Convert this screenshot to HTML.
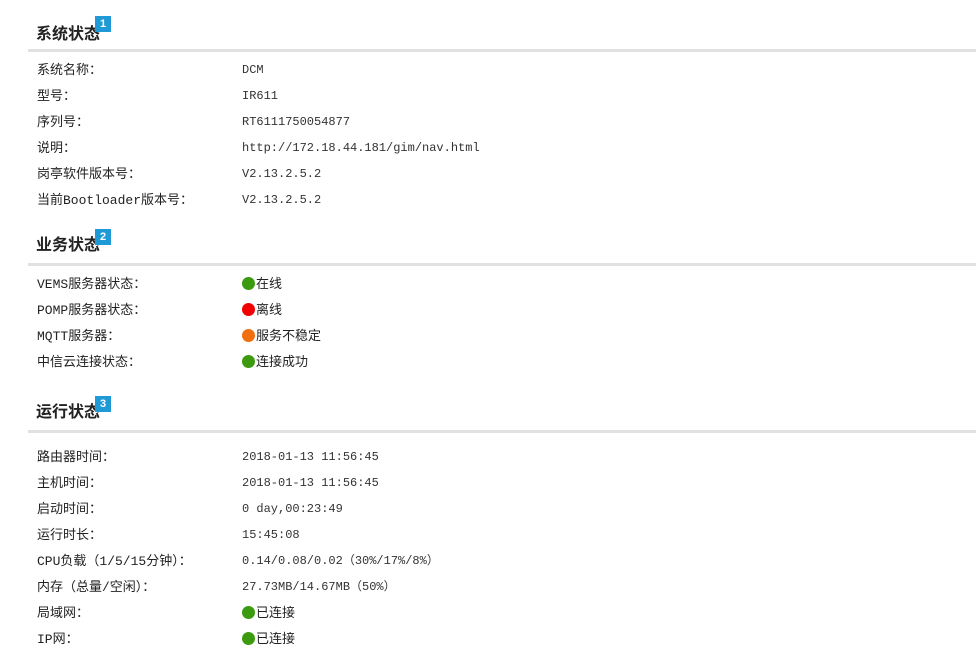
<!DOCTYPE html>
<html><head><meta charset="utf-8"><style>
body{margin:0;width:976px;height:659px;background:#fff;position:relative;overflow:hidden;font-family:"Liberation Mono","Noto Sans CJK SC",monospace;color:#222}
.t{position:absolute;left:36px;font:bold 16px "Liberation Sans","Noto Sans CJK SC",sans-serif;color:#222;line-height:20px}
.b{position:absolute;width:16px;height:16px;background:#1f9ad6;color:#fff;font:bold 11px "Liberation Sans",sans-serif;text-align:center;line-height:16px}
.ln{position:absolute;left:28px;width:948px;height:3px;background:#e1e1e1}
.l{position:absolute;left:37px;font-size:13px;line-height:16px;white-space:nowrap;margin-top:2px}
.v{position:absolute;left:242px;font-size:12px;line-height:16px;white-space:nowrap;margin-top:1px;color:#333}
.d{display:inline-block;width:13px;height:13px;border-radius:50%;vertical-align:-2px;margin-right:1px}
.g{background:#3b9a0e}.r{background:#f00000}.o{background:#f07010}
.c{font-family:"Liberation Sans","Noto Sans CJK SC",sans-serif;font-size:13px;color:#222}
</style></head><body>
<div class="t" style="top:25px">系统状态</div><div class="b" style="left:95px;top:16px">1</div><div class="ln" style="top:49px"></div>
<div class="l" style="top:61px">系统名称：</div><div class="v" style="top:61px">DCM</div>
<div class="l" style="top:87px">型号：</div><div class="v" style="top:87px">IR611</div>
<div class="l" style="top:113px">序列号：</div><div class="v" style="top:113px">RT6111750054877</div>
<div class="l" style="top:139px">说明：</div><div class="v" style="top:139px">http://172.18.44.181/gim/nav.html</div>
<div class="l" style="top:165px">岗亭软件版本号：</div><div class="v" style="top:165px">V2.13.2.5.2</div>
<div class="l" style="top:191px">当前Bootloader版本号：</div><div class="v" style="top:191px">V2.13.2.5.2</div>

<div class="t" style="top:236px">业务状态</div><div class="b" style="left:95px;top:229px">2</div><div class="ln" style="top:263px"></div>
<div class="l" style="top:275px">VEMS服务器状态：</div><div class="v" style="top:275px"><span class="d g"></span><span class="c">在线</span></div>
<div class="l" style="top:301px">POMP服务器状态：</div><div class="v" style="top:301px"><span class="d r"></span><span class="c">离线</span></div>
<div class="l" style="top:327px">MQTT服务器：</div><div class="v" style="top:327px"><span class="d o"></span><span class="c">服务不稳定</span></div>
<div class="l" style="top:353px">中信云连接状态：</div><div class="v" style="top:353px"><span class="d g"></span><span class="c">连接成功</span></div>

<div class="t" style="top:403px">运行状态</div><div class="b" style="left:95px;top:396px">3</div><div class="ln" style="top:430px"></div>
<div class="l" style="top:448px">路由器时间：</div><div class="v" style="top:448px">2018-01-13 11:56:45</div>
<div class="l" style="top:474px">主机时间：</div><div class="v" style="top:474px">2018-01-13 11:56:45</div>
<div class="l" style="top:500px">启动时间：</div><div class="v" style="top:500px">0 day,00:23:49</div>
<div class="l" style="top:526px">运行时长：</div><div class="v" style="top:526px">15:45:08</div>
<div class="l" style="top:552px">CPU负载（1/5/15分钟）：</div><div class="v" style="top:552px">0.14/0.08/0.02（30%/17%/8%）</div>
<div class="l" style="top:578px">内存（总量/空闲）：</div><div class="v" style="top:578px">27.73MB/14.67MB（50%）</div>
<div class="l" style="top:604px">局域网：</div><div class="v" style="top:604px"><span class="d g"></span><span class="c">已连接</span></div>
<div class="l" style="top:630px">IP网：</div><div class="v" style="top:630px"><span class="d g"></span><span class="c">已连接</span></div>
</body></html>
